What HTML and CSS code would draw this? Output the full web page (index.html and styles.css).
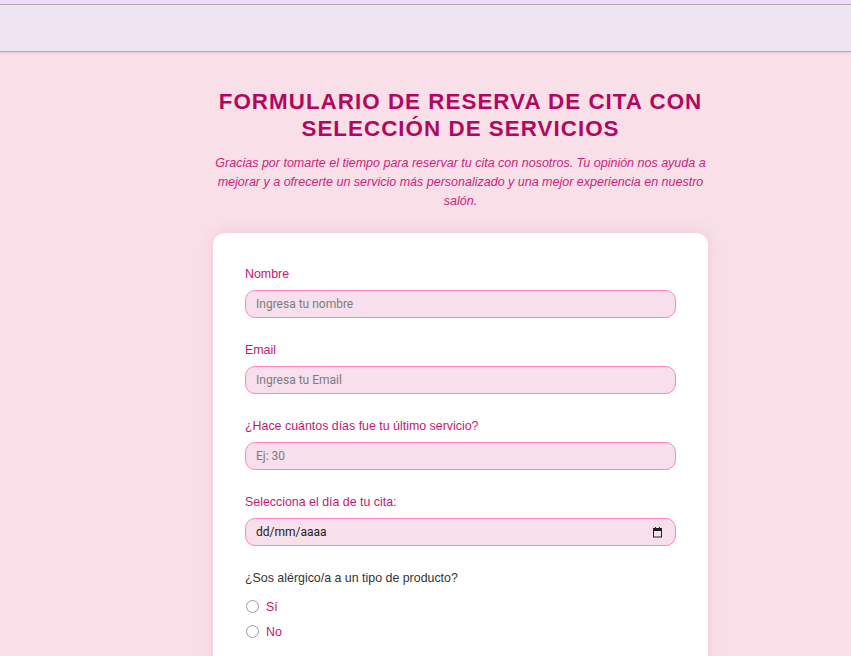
FILE: index.html
```html
<!DOCTYPE html>
<html lang="es">
<head>
<meta charset="utf-8">
<title>Formulario de reserva de cita</title>
<link rel="stylesheet" href="styles.css">
</head>
<body>
<div class="top-strip"></div>
<header class="top-bar"></header>
<main class="page">
  <div class="container">
    <h1 class="title">FORMULARIO DE RESERVA DE CITA CON SELECCIÓN DE SERVICIOS</h1>
    <p class="intro">Gracias por tomarte el tiempo para reservar tu cita con nosotros. Tu opinión nos ayuda a mejorar y a ofrecerte un servicio más personalizado y una mejor experiencia en nuestro salón.</p>
    <form class="card">
      <div class="field">
        <label class="label" for="nombre">Nombre</label>
        <input class="input" id="nombre" type="text" placeholder="Ingresa tu nombre">
      </div>
      <div class="field">
        <label class="label" for="email">Email</label>
        <input class="input" id="email" type="email" placeholder="Ingresa tu Email">
      </div>
      <div class="field">
        <label class="label" for="dias">¿Hace cuántos días fue tu último servicio?</label>
        <input class="input" id="dias" type="text" placeholder="Ej: 30">
      </div>
      <div class="field">
        <label class="label" for="fecha">Selecciona el día de tu cita:</label>
        <div class="input date-box">
          <input class="date-text" id="fecha" type="text" placeholder="dd/mm/aaaa">
          <svg class="cal-icon" width="11" height="11" viewBox="0 0 11 11" aria-hidden="true">
            <rect x="1" y="1" width="9" height="3" fill="#222"/>
            <rect x="1.5" y="1.5" width="8" height="8.5" fill="none" stroke="#222" stroke-width="1"/>
            <rect x="3" y="0" width="1" height="2" fill="#222"/>
            <rect x="7" y="0" width="1" height="2" fill="#222"/>
          </svg>
        </div>
      </div>
      <div class="field">
        <p class="question">¿Sos alérgico/a a un tipo de producto?</p>
        <label class="radio-row"><input class="radio" type="radio" name="alergia" value="si"><span>Sí</span></label>
        <label class="radio-row"><input class="radio" type="radio" name="alergia" value="no"><span>No</span></label>
      </div>
    </form>
  </div>
</main>
</body>
</html>
```

FILE: styles.css
```css
html, body {
  margin: 0;
  padding: 0;
}

body {
  background: #f9dfe8;
  font-family: "Liberation Sans", Arial, sans-serif;
  min-height: 656px;
}

.top-strip {
  height: 4px;
  background: #eedcf6;
}

.top-bar {
  height: 46px;
  background: #efe4f2;
  border-top: 1px solid #b6a8b9;
  border-bottom: 1px solid #b6a8b9;
  box-shadow: 0 1px 2px rgba(120, 90, 120, 0.18);
}

.page {
  display: flex;
  justify-content: center;
  padding-left: 70px;
}

.container {
  width: 495px;
  padding-top: 36px;
}

.title {
  margin: 0;
  text-align: center;
  font-family: "Liberation Sans", Arial, sans-serif;
  font-size: 22.4px;
  line-height: 27px;
  font-weight: bold;
  letter-spacing: 1.02px;
  color: #b1085e;
}

.intro {
  margin: 12px 0 0;
  text-align: center;
  font-style: italic;
  font-size: 12.5px;
  line-height: 19px;
  color: #cf2479;
}

.card {
  margin-top: 22px;
  background: #ffffff;
  border-radius: 12px;
  padding: 34px 32px 32px;
  box-shadow: 0 0 14px rgba(214, 120, 165, 0.22);
}

.field {
  margin-bottom: 25px;
}

.label {
  display: block;
  font-family: "Liberation Sans", Arial, sans-serif;
  font-size: 12.4px;
  line-height: 14px;
  color: #c51772;
  margin-bottom: 9px;
}

.input {
  display: block;
  box-sizing: border-box;
  width: 100%;
  height: 28px;
  margin: 0;
  padding: 0 10px;
  background: #f8dfec;
  border: 1px solid #ff86c3;
  border-radius: 10px;
  font-family: Roboto, "Liberation Sans", Arial, sans-serif;
  font-size: 12px;
  color: #222;
  outline: none;
}

.input::placeholder {
  color: #7d7d7d;
}

.date-box {
  display: flex;
  align-items: center;
  justify-content: space-between;
  padding-right: 12px;
}

.date-text {
  flex: 1;
  min-width: 0;
  border: 0;
  background: transparent;
  padding: 0;
  margin: 0;
  font-family: Roboto, "Liberation Sans", Arial, sans-serif;
  font-size: 12px;
  color: #222;
  outline: none;
}

.date-text::placeholder {
  color: #222;
}

.cal-icon {
  display: block;
  flex: none;
}

.question {
  margin: 0 0 9px;
  font-family: "Liberation Sans", Arial, sans-serif;
  font-size: 12.4px;
  line-height: 14px;
  color: #333;
}

.radio-row {
  display: flex;
  align-items: center;
  height: 25px;
  font-family: "Liberation Sans", Arial, sans-serif;
  font-size: 12.4px;
  color: #c51772;
}

.radio {
  appearance: none;
  -webkit-appearance: none;
  box-sizing: border-box;
  width: 13px;
  height: 13px;
  margin: 0 7px 0 1px;
  border: 1px solid #9a9a9a;
  border-radius: 50%;
  background: #fff;
}

.radio:checked {
  border: 4px solid #c51772;
}
```
